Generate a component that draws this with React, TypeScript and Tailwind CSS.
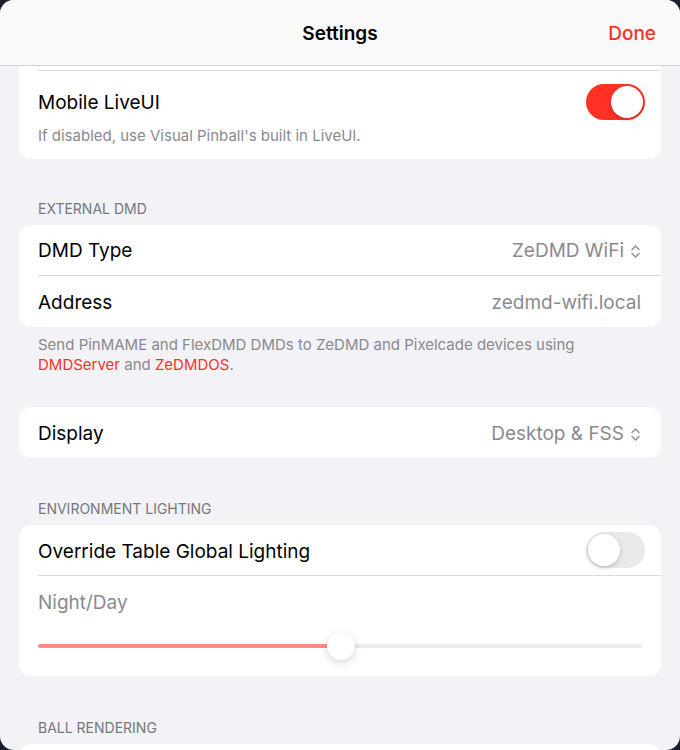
import React, { useState } from 'react';

const font = { fontFamily: 'Inter, "Noto Sans", sans-serif' };

function Toggle({ on, onChange }: { on: boolean; onChange: () => void }) {
  return (
    <button
      onClick={onChange}
      className={`relative w-[59px] h-[36px] rounded-full shrink-0 transition-colors ${
        on ? 'bg-[#ff3126]' : 'bg-[#e9e9eb]'
      }`}
    >
      <span
        className={`absolute top-[2px] w-[32px] h-[32px] rounded-full bg-white shadow-[0_2px_5px_rgba(0,0,0,0.18)] transition-all ${
          on ? 'left-[25px]' : 'left-[2px]'
        }`}
      />
    </button>
  );
}

function UpDown() {
  return (
    <svg width="11" height="15" viewBox="0 0 11 15" fill="none" className="ml-[6px]">
      <path d="M2 5.5 5.5 2 9 5.5" stroke="#8a8a8e" strokeWidth="1.4" strokeLinecap="round" strokeLinejoin="round" />
      <path d="M2 9.5 5.5 13 9 9.5" stroke="#8a8a8e" strokeWidth="1.4" strokeLinecap="round" strokeLinejoin="round" />
    </svg>
  );
}

function Row({ label, value, picker, last }: { label: string; value: string; picker?: boolean; last?: boolean }) {
  return (
    <div className="pl-[19px]">
      <div
        className={`h-[51px] flex items-center justify-between pr-[20px] pt-[3px] ${
          last ? '' : 'border-b border-[#dcdce0]'
        }`}
      >
        <span className="text-[19px] text-black">{label}</span>
        <span className="flex items-center text-[19px] text-[#8a8a8e]">
          {value}
          {picker && <UpDown />}
        </span>
      </div>
    </div>
  );
}

function Header({ children }: { children: React.ReactNode }) {
  return (
    <div className="px-[38px] pt-[1px] text-[14px] leading-[18px] text-[#77777c] uppercase mb-[7px]">{children}</div>
  );
}

export default function App() {
  const [liveUI, setLiveUI] = useState(true);
  const [override, setOverride] = useState(false);
  const [nightDay] = useState(50);

  return (
    <div className="w-[680px] h-[750px] bg-[#1d2030]" style={font}>
      <div className="h-full rounded-[14px] overflow-hidden bg-[#f2f2f7] flex flex-col">
        {/* nav bar */}
        <div className="h-[66px] shrink-0 bg-[#f9f9f9] border-b border-[#d3d3d6] flex items-center px-[24px] pt-[4px]">
          <span className="flex-1" />
          <span className="text-[19px] font-semibold text-black">Settings</span>
          <span className="flex-1 flex justify-end">
            <button className="text-[19px] font-medium text-[#ff3126]">Done</button>
          </span>
        </div>

        {/* first card (scrolled) */}
        <div className="mx-[19px] bg-white rounded-b-[12px]">
          <div className="h-[5px] ml-[19px] border-b border-[#dcdce0]" />
          <div className="pl-[19px] pr-[16px] pt-[13px] pb-[13px]">
            <div className="flex items-center justify-between">
              <span className="text-[19px] text-black pt-[2px]">Mobile LiveUI</span>
              <Toggle on={liveUI} onChange={() => setLiveUI(!liveUI)} />
            </div>
            <p className="mt-[6px] text-[15px] leading-[20px] text-[#8a8a8e]">
              If disabled, use Visual Pinball's built in LiveUI.
            </p>
          </div>
        </div>

        <div className="mt-[40px]">
          <Header>External DMD</Header>
          <div className="mx-[19px] bg-white rounded-[12px]">
            <Row label="DMD Type" value="ZeDMD WiFi" picker />
            <Row label="Address" value="zedmd-wifi.local" last />
          </div>
          <p className="px-[38px] mt-[8px] text-[15px] leading-[19.5px] text-[#8a8a8e]">
            Send PinMAME and FlexDMD DMDs to ZeDMD and Pixelcade devices using{' '}
            <span className="text-[#ff3126]">DMDServer</span> and{' '}
            <span className="text-[#ff3126]">ZeDMDOS</span>.
          </p>
        </div>

        <div className="mt-[33px] mx-[19px] bg-white rounded-[12px]">
          <Row label="Display" value="Desktop & FSS" picker last />
        </div>

        <div className="mt-[41px]">
          <Header>Environment Lighting</Header>
          <div className="mx-[19px] bg-white rounded-[12px]">
            <div className="pl-[19px]">
              <div className="h-[51px] flex items-center justify-between pr-[16px] border-b border-[#dcdce0]">
                <span className="text-[19px] text-black pt-[4px]">Override Table Global Lighting</span>
                <Toggle on={override} onChange={() => setOverride(!override)} />
              </div>
            </div>
            <div className="px-[19px] pt-[15px] pb-[16px]">
              <div className="text-[19px] leading-[24px] text-[#8a8a8e]">Night/Day</div>
              <div className="relative mt-[17px] h-[28px] flex items-center">
                <div className="w-full h-[4px] rounded-full bg-[#ededef]">
                  <div className="h-full rounded-full bg-[#ff8a87]" style={{ width: `${nightDay}%` }} />
                </div>
                <div
                  className="absolute top-0 w-[28px] h-[28px] rounded-full bg-white shadow-[0_3px_8px_rgba(0,0,0,0.15),0_0_1px_rgba(0,0,0,0.1)]"
                  style={{ left: `calc(${nightDay}% - 13px)` }}
                />
              </div>
            </div>
          </div>
        </div>

        <div className="mt-[42px]">
          <Header>Ball Rendering</Header>
          <div className="mx-[19px] h-[60px] bg-white rounded-[12px]" />
        </div>
      </div>
    </div>
  );
}
